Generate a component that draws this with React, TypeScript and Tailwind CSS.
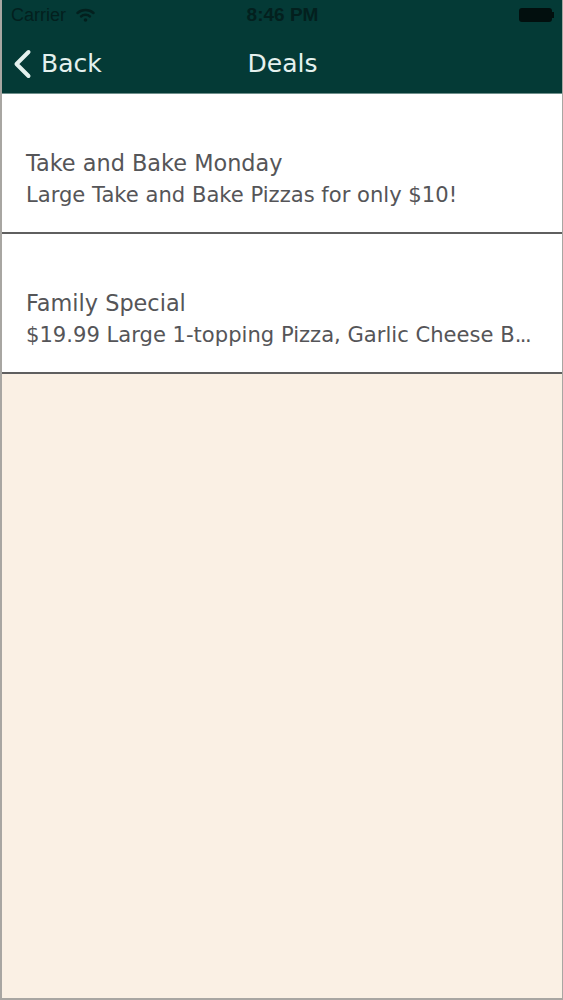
import type { ReactNode } from "react";

const dejavu = "font-['DejaVu_Sans',sans-serif]";

function Row({ title, sub }: { title: string; sub: ReactNode }) {
  return (
    <div className="h-[140px] flex flex-col justify-end pb-[21px] pl-[24px] pr-[30px] bg-white border-b-2 border-[#5f5f5f]">
      <div className="text-[22.4px] leading-[32px] text-[#555558] whitespace-nowrap">{title}</div>
      <div className="text-[21.1px] leading-[32px] text-[#555558] whitespace-nowrap">{sub}</div>
    </div>
  );
}

export default function App() {
  return (
    <div className={`${dejavu} w-[563px] h-[1000px] flex flex-col bg-[#faf0e4] border-l-2 border-r border-b-2 border-[#a8a6a2] overflow-hidden`}>
      <header className="h-[94px] shrink-0 bg-[#043a36] border-b border-[#6f8f8b] flex flex-col">
        <div className="h-[30px] shrink-0 grid grid-cols-3 items-center pl-[9px] pr-[8px] text-[#03201e]">
          <div className="flex items-center gap-[10px]">
            <span className="text-[18px] font-['Liberation_Sans',sans-serif]">Carrier</span>
            <svg width="19" height="15" viewBox="0 0 19 15" fill="none" stroke="currentColor" strokeWidth="2.4" strokeLinecap="round">
              <path d="M1.5 5 C6 1 13 1 17.5 5" />
              <path d="M5 8.5 C7.5 6.2 11.5 6.2 14 8.5" />
              <circle cx="9.5" cy="12" r="1.8" fill="currentColor" stroke="none" />
            </svg>
          </div>
          <span className="text-[19px] font-bold font-['Liberation_Sans',sans-serif] text-center whitespace-nowrap">8:46 PM</span>
          <div className="flex items-center justify-end">
            <div className="w-[33px] h-[14px] bg-[#020f0e] rounded-[3px]" />
            <div className="w-[2px] h-[6px] bg-[#020f0e]" />
          </div>
        </div>
        <div className="flex-1 grid grid-cols-3 items-center pl-[11px] pt-[5px]">
          <div className="flex items-center gap-[9px] text-[#e4f1ee]">
            <svg width="19" height="30" viewBox="0 0 19 30" fill="none" stroke="currentColor" strokeWidth="4" strokeLinecap="round" strokeLinejoin="round">
              <path d="M15.5 3 L3.5 15 L15.5 27" />
            </svg>
            <span className="text-[25px] leading-[32px]">Back</span>
          </div>
          <span className="text-[25px] leading-[32px] text-[#e4f1ee] text-center -translate-x-[5px]">Deals</span>
        </div>
      </header>
      <Row title="Take and Bake Monday" sub="Large Take and Bake Pizzas for only $10!" />
      <Row
        title="Family Special"
        sub={
          <>
            $19.99 Large 1-topping Pizza, Garlic Cheese B<span className="tracking-[-1.5px]">...</span>
          </>
        }
      />
    </div>
  );
}
